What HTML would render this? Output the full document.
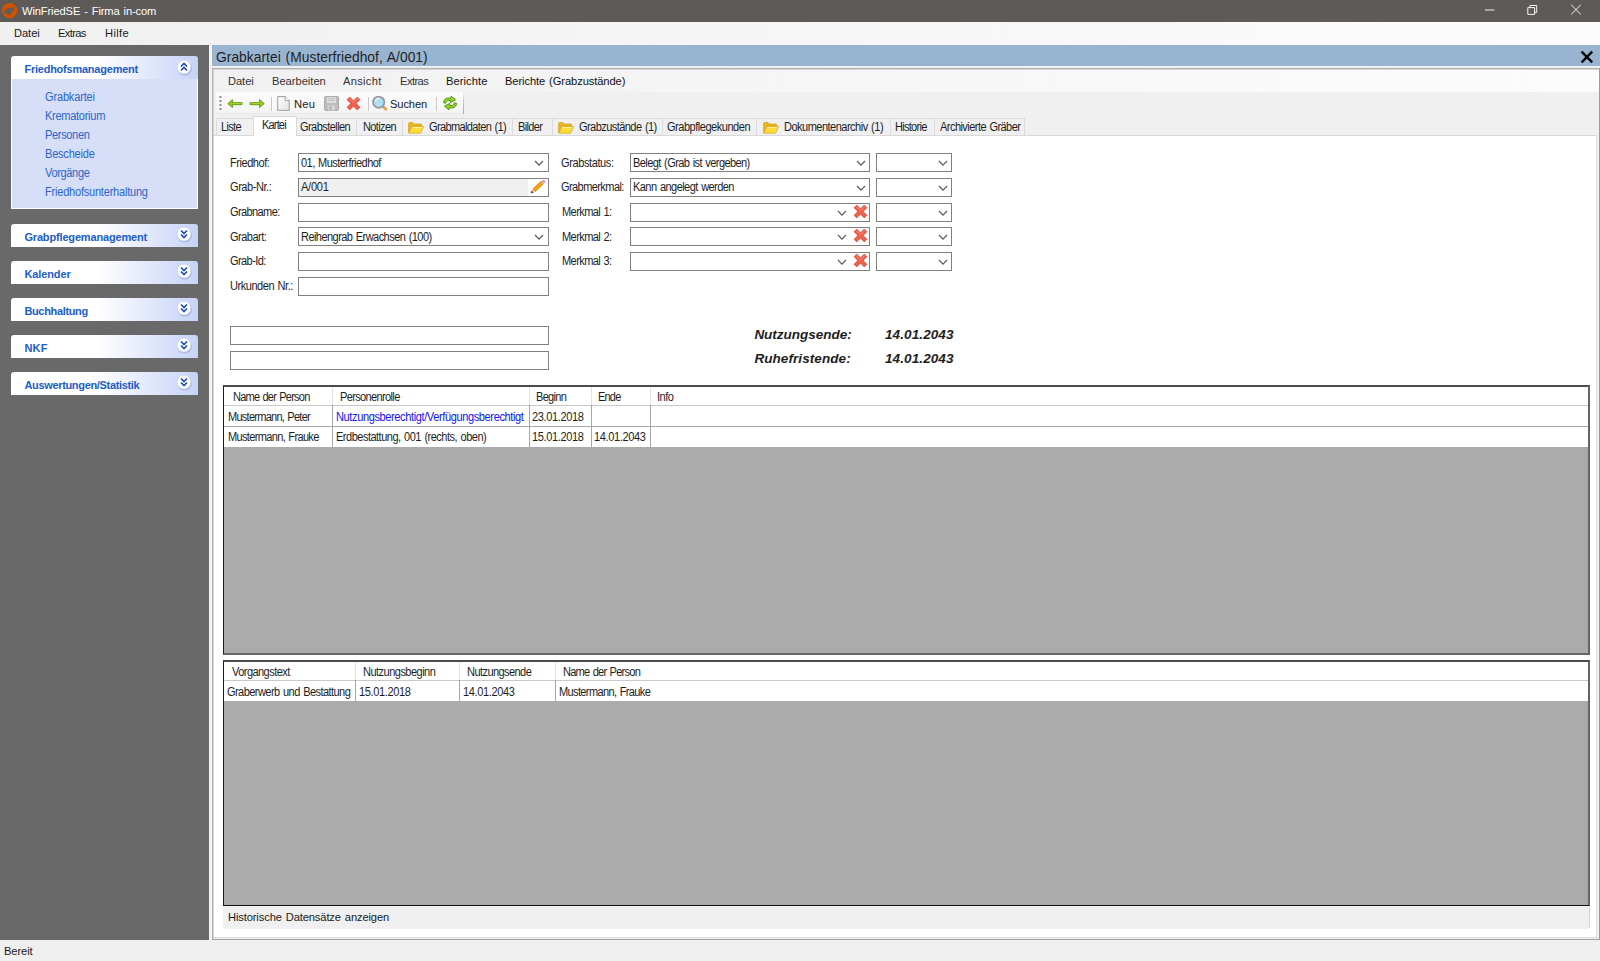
<!DOCTYPE html>
<html lang="de"><head><meta charset="utf-8"><title>WinFriedSE - Firma in-com</title>
<style>
html,body{margin:0;padding:0;background:#f0f0f0;}
#app{position:relative;width:1600px;height:961px;overflow:hidden;background:#f0f0f0;font-family:"Liberation Sans",sans-serif;}
.t{position:absolute;transform-origin:0 0;white-space:pre;word-spacing:1px;line-height:1;font-family:"Liberation Sans",sans-serif;}
svg{position:absolute;overflow:visible;}

</style></head>
<body>
<div id="app">
<div style="position:absolute;left:0px;top:0px;width:1600px;height:22px;background:#5d5a58"></div>
<svg style="left:2px;top:3px" width="16" height="16" viewBox="0 0 16 16"><circle cx="7.6" cy="7.6" r="7.6" fill="#cf5300"/><path d="M2.4 10.4 L2.4 7.2 L3.6 6 L4.3 6.9 L5.6 4.5 L6.8 5.5 L8.2 4.6 L9 5.3 L12.4 3.8 L11.6 7.2 L9.4 9.6 L8.4 11.4 L5.2 11.6 L4.4 10.8 Z" fill="#5f5c5a"/></svg>
<svg style="left:1480px;top:0" width="120" height="22" viewBox="0 0 120 22" fill="none" stroke="#f4f4f4" stroke-width="1">
<path d="M5 10 H14.4"/>
<path d="M47.8 7.6 H54.6 V14.4 H47.8 Z M49.9 7.6 V5.5 H56.7 V12.3 H54.6"/>
<path d="M91.2 4.8 L100.8 14.4 M100.8 4.8 L91.2 14.4"/></svg>
<div style="position:absolute;left:0px;top:22px;width:1600px;height:23px;background:linear-gradient(90deg,#f0f0f0 0,#fcfcfc 100%)"></div>
<div style="position:absolute;left:0px;top:45px;width:209px;height:895px;background:#696969"></div>
<div style="position:absolute;left:209px;top:45px;width:3px;height:895px;background:#f4f4f4"></div>
<div style="position:absolute;left:11px;top:56px;width:187px;height:23px;background:linear-gradient(90deg,#ffffff 0,#ffffff 46%,#c7d3f7 100%);border-radius:3px 3px 0 0;"></div>
<div style="position:absolute;left:11px;top:79px;width:187px;height:130px;background:#d6dff7;border:1px solid #fff;border-top:none;box-sizing:border-box"></div>
<svg style="left:174px;top:56.5px" width="20" height="20" viewBox="-10 -10 20 20"><circle cx="0.6" cy="1.2" r="7.4" fill="#6374b5" opacity="0.30"/><circle cx="0" cy="0" r="6.9" fill="#fff" stroke="#c9d2ee" stroke-width="0.8"/><path d="M-3 0.5 L0 -2.5 L3 0.5 M-3 4.5 L0 1.5 L3 4.5" transform="translate(0,-1)" fill="none" stroke="#1f4fb5" stroke-width="1.7"/></svg>
<div style="position:absolute;left:11px;top:224px;width:187px;height:23px;background:linear-gradient(90deg,#ffffff 0,#ffffff 46%,#c7d3f7 100%);border-radius:3px 3px 0 0;"></div>
<svg style="left:174px;top:224px" width="20" height="20" viewBox="-10 -10 20 20"><circle cx="0.6" cy="1.2" r="7.4" fill="#6374b5" opacity="0.30"/><circle cx="0" cy="0" r="6.9" fill="#fff" stroke="#c9d2ee" stroke-width="0.8"/><path d="M-3 -2.5 L0 0.5 L3 -2.5 M-3 1.5 L0 4.5 L3 1.5" transform="translate(0,-1)" fill="none" stroke="#1f4fb5" stroke-width="1.7"/></svg>
<div style="position:absolute;left:11px;top:261px;width:187px;height:23px;background:linear-gradient(90deg,#ffffff 0,#ffffff 46%,#c7d3f7 100%);border-radius:3px 3px 0 0;"></div>
<svg style="left:174px;top:261px" width="20" height="20" viewBox="-10 -10 20 20"><circle cx="0.6" cy="1.2" r="7.4" fill="#6374b5" opacity="0.30"/><circle cx="0" cy="0" r="6.9" fill="#fff" stroke="#c9d2ee" stroke-width="0.8"/><path d="M-3 -2.5 L0 0.5 L3 -2.5 M-3 1.5 L0 4.5 L3 1.5" transform="translate(0,-1)" fill="none" stroke="#1f4fb5" stroke-width="1.7"/></svg>
<div style="position:absolute;left:11px;top:298px;width:187px;height:23px;background:linear-gradient(90deg,#ffffff 0,#ffffff 46%,#c7d3f7 100%);border-radius:3px 3px 0 0;"></div>
<svg style="left:174px;top:298px" width="20" height="20" viewBox="-10 -10 20 20"><circle cx="0.6" cy="1.2" r="7.4" fill="#6374b5" opacity="0.30"/><circle cx="0" cy="0" r="6.9" fill="#fff" stroke="#c9d2ee" stroke-width="0.8"/><path d="M-3 -2.5 L0 0.5 L3 -2.5 M-3 1.5 L0 4.5 L3 1.5" transform="translate(0,-1)" fill="none" stroke="#1f4fb5" stroke-width="1.7"/></svg>
<div style="position:absolute;left:11px;top:335px;width:187px;height:23px;background:linear-gradient(90deg,#ffffff 0,#ffffff 46%,#c7d3f7 100%);border-radius:3px 3px 0 0;"></div>
<svg style="left:174px;top:335px" width="20" height="20" viewBox="-10 -10 20 20"><circle cx="0.6" cy="1.2" r="7.4" fill="#6374b5" opacity="0.30"/><circle cx="0" cy="0" r="6.9" fill="#fff" stroke="#c9d2ee" stroke-width="0.8"/><path d="M-3 -2.5 L0 0.5 L3 -2.5 M-3 1.5 L0 4.5 L3 1.5" transform="translate(0,-1)" fill="none" stroke="#1f4fb5" stroke-width="1.7"/></svg>
<div style="position:absolute;left:11px;top:372px;width:187px;height:23px;background:linear-gradient(90deg,#ffffff 0,#ffffff 46%,#c7d3f7 100%);border-radius:3px 3px 0 0;"></div>
<svg style="left:174px;top:372px" width="20" height="20" viewBox="-10 -10 20 20"><circle cx="0.6" cy="1.2" r="7.4" fill="#6374b5" opacity="0.30"/><circle cx="0" cy="0" r="6.9" fill="#fff" stroke="#c9d2ee" stroke-width="0.8"/><path d="M-3 -2.5 L0 0.5 L3 -2.5 M-3 1.5 L0 4.5 L3 1.5" transform="translate(0,-1)" fill="none" stroke="#1f4fb5" stroke-width="1.7"/></svg>
<div style="position:absolute;left:212px;top:45px;width:1388px;height:21px;background:#99b4d1"></div>
<svg style="left:1580px;top:50px" width="14" height="14" viewBox="0 0 14 14"><path d="M1.6 1.6 L12.2 12.4 M12.2 1.6 L1.6 12.4" stroke="#000" stroke-width="2.3" fill="none"/></svg>
<div style="position:absolute;left:212px;top:68px;width:1388px;height:872px;background:#f0f0f0;border:1px solid #b0b0b0;border-right-color:#9a9a9a;border-bottom-color:#a0a0a0;box-sizing:border-box"></div>
<div style="position:absolute;left:213px;top:69px;width:1386px;height:870px;border-top:1px solid #d6d6d6;border-left:1px solid #d6d6d6;box-sizing:border-box"></div>
<div style="position:absolute;left:214px;top:70px;width:1385px;height:22px;background:linear-gradient(90deg,#f1f1f1 0,#fcfcfc 100%)"></div>
<div style="position:absolute;left:214px;top:92px;width:1385px;height:44px;background:#f0f0f0"></div>
<div style="position:absolute;left:216px;top:92px;width:247px;height:22px;background:linear-gradient(180deg,#fcfcfc 0,#f4f4f4 100%);border-radius:3px 3px 2px 3px;border-bottom:1px solid #e8e8e8;box-sizing:border-box"></div>
<div style="position:absolute;left:463px;top:94px;width:1px;height:20px;background:linear-gradient(180deg,#f0f0f0 0,#c9c9c9 35%,#a9a9a9 100%)"></div>
<svg style="left:219px;top:95px" width="4" height="16" viewBox="0 0 4 16"><g fill="#8c8c8c"><rect x="0.5" y="1" width="2" height="2"/><rect x="0.5" y="5" width="2" height="2"/><rect x="0.5" y="9" width="2" height="2"/><rect x="0.5" y="13" width="2" height="2"/></g></svg>
<svg style="left:227px;top:98px" width="16" height="11" viewBox="0 0 16 11"><path d="M0.8 5.6 L5.4 1.7 L5.4 4.5 L15 4.5 L15 6.7 L5.4 6.7 L5.4 9.5 Z" fill="#96c81e" stroke="#6c9e12" stroke-width="1" stroke-linejoin="round"/><path d="M5.6 5.1 H14.4" stroke="#b6dc52" stroke-width="0.7"/></svg>
<svg style="left:249px;top:98px" width="16" height="11" viewBox="0 0 16 11"><path d="M15.2 5.6 L10.6 1.7 L10.6 4.5 L1 4.5 L1 6.7 L10.6 6.7 L10.6 9.5 Z" fill="#96c81e" stroke="#6c9e12" stroke-width="1" stroke-linejoin="round"/><path d="M1.6 5.1 H10.4" stroke="#b6dc52" stroke-width="0.7"/></svg>
<div style="position:absolute;left:271px;top:97px;width:1px;height:14px;background:#c6c6c6"></div>
<div style="position:absolute;left:272px;top:97px;width:1px;height:14px;background:#fff"></div>
<div style="position:absolute;left:368px;top:97px;width:1px;height:14px;background:#c6c6c6"></div>
<div style="position:absolute;left:369px;top:97px;width:1px;height:14px;background:#fff"></div>
<div style="position:absolute;left:436px;top:97px;width:1px;height:14px;background:#c6c6c6"></div>
<div style="position:absolute;left:437px;top:97px;width:1px;height:14px;background:#fff"></div>
<svg style="left:277px;top:96px" width="13" height="15" viewBox="0 0 13 15"><defs><linearGradient id="pg" x1="0" y1="0" x2="1" y2="1"><stop offset="0" stop-color="#fff"/><stop offset="1" stop-color="#e2e2e2"/></linearGradient></defs><path d="M0.7 0.6 H8.2 L12.3 4.6 V14.3 H0.7 Z" fill="url(#pg)" stroke="#9c9c9c" stroke-width="1"/><path d="M8.2 0.6 V4.6 H12.3" fill="#fff" stroke="#9c9c9c" stroke-width="0.9"/></svg>
<svg style="left:324px;top:96px" width="15" height="15" viewBox="0 0 15 15"><rect x="0.6" y="0.6" width="13.8" height="13.8" rx="1" fill="#bdbdbd" stroke="#a6a6a6"/><rect x="3" y="1" width="9" height="6" fill="#dcdcdc"/><path d="M4 2.6 H11 M4 4.4 H11" stroke="#bcbcbc" stroke-width="0.8"/><rect x="4" y="9.4" width="7" height="5" fill="#d6d6d6"/><rect x="5.4" y="10.4" width="2" height="3.2" fill="#aaa"/></svg>
<svg style="left:346px;top:96px" width="15" height="15" viewBox="0 0 15 15"><g fill="none" stroke-linecap="square"><path d="M3.8 3.8 L11.2 11.2 M11.2 3.8 L3.8 11.2" stroke="#dc4a38" stroke-width="4.4"/><path d="M3.8 3.8 L11.2 11.2 M11.2 3.8 L3.8 11.2" stroke="#f0604f" stroke-width="3.4"/><path d="M3.2 2.6 L7.5 6.6 L11.8 2.6" stroke="#f58b7d" stroke-width="1"/></g></svg>
<svg style="left:371px;top:94px" width="18" height="18" viewBox="0 0 18 18"><path d="M11.6 12 L14.4 14.8" stroke="#a8a8a8" stroke-width="2.6" stroke-linecap="round"/><path d="M13.8 14.2 L14.8 15.2" stroke="#e9a646" stroke-width="2.8" stroke-linecap="round"/><circle cx="7.7" cy="8.2" r="5.6" fill="#aee1f9" stroke="#9b9b9b" stroke-width="1.9"/><path d="M4.4 7.2 A3.6 3.6 0 0 1 8.4 4.4" stroke="#e9f8ff" stroke-width="1.4" fill="none"/></svg>
<svg style="left:442px;top:95px" width="16" height="16" viewBox="0 0 16 16"><g fill="#9ad023" stroke="#4b9a0e" stroke-width="1" stroke-linejoin="round"><path d="M1.4 7.6 C1.6 4 5 2.2 8.6 3.4 L9 1.2 L13.6 4.8 L8.2 7.6 L8.5 5.6 C6.2 5 4 5.6 3.6 8.2 Z"/><path d="M14.6 8.4 C14.4 12 11 13.8 7.4 12.6 L7 14.8 L2.4 11.2 L7.8 8.4 L7.5 10.4 C9.8 11 12 10.4 12.4 7.8 Z"/></g></svg>
<div style="position:absolute;left:214px;top:135px;width:1383px;height:1px;background:#d9d9d9"></div>
<div style="position:absolute;left:214px;top:136px;width:1383px;height:802px;background:#fff;border-right:1px solid #dcdcdc;border-bottom:1px solid #dcdcdc;box-sizing:border-box"></div>
<div style="position:absolute;left:216px;top:118px;width:39px;height:17px;background:#f0f0f0;border:1px solid #dcdcdc;border-bottom:none;box-sizing:border-box;"></div>
<div style="position:absolute;left:296px;top:118px;width:61px;height:17px;background:#f0f0f0;border:1px solid #dcdcdc;border-bottom:none;box-sizing:border-box;"></div>
<div style="position:absolute;left:356px;top:118px;width:47px;height:17px;background:#f0f0f0;border:1px solid #dcdcdc;border-bottom:none;box-sizing:border-box;"></div>
<div style="position:absolute;left:402px;top:118px;width:111px;height:17px;background:#f0f0f0;border:1px solid #dcdcdc;border-bottom:none;box-sizing:border-box;"></div>
<svg style="left:408.2px;top:121.6px" width="17" height="12" viewBox="0 0 17 12"><path d="M0.6 1.4 Q0.6 0.6 1.4 0.6 H5 L6.4 2 H13 Q13.6 2 13.6 2.8 V4.2 H3.6 L0.6 10.6 Z" fill="#e9b824" stroke="#d19f12" stroke-width="0.7"/><path d="M3.8 4.4 H15.6 L12.6 11.2 H0.8 Z" fill="#fbdc3c" stroke="#d9a714" stroke-width="0.7" stroke-linejoin="round"/><path d="M4.6 5.6 H13.6" stroke="#fff4a6" stroke-width="1"/></svg>
<div style="position:absolute;left:512px;top:118px;width:41px;height:17px;background:#f0f0f0;border:1px solid #dcdcdc;border-bottom:none;box-sizing:border-box;"></div>
<div style="position:absolute;left:552px;top:118px;width:111px;height:17px;background:#f0f0f0;border:1px solid #dcdcdc;border-bottom:none;box-sizing:border-box;"></div>
<svg style="left:557.8px;top:121.6px" width="17" height="12" viewBox="0 0 17 12"><path d="M0.6 1.4 Q0.6 0.6 1.4 0.6 H5 L6.4 2 H13 Q13.6 2 13.6 2.8 V4.2 H3.6 L0.6 10.6 Z" fill="#e9b824" stroke="#d19f12" stroke-width="0.7"/><path d="M3.8 4.4 H15.6 L12.6 11.2 H0.8 Z" fill="#fbdc3c" stroke="#d9a714" stroke-width="0.7" stroke-linejoin="round"/><path d="M4.6 5.6 H13.6" stroke="#fff4a6" stroke-width="1"/></svg>
<div style="position:absolute;left:662px;top:118px;width:95px;height:17px;background:#f0f0f0;border:1px solid #dcdcdc;border-bottom:none;box-sizing:border-box;"></div>
<div style="position:absolute;left:756px;top:118px;width:135px;height:17px;background:#f0f0f0;border:1px solid #dcdcdc;border-bottom:none;box-sizing:border-box;"></div>
<svg style="left:763px;top:121.6px" width="17" height="12" viewBox="0 0 17 12"><path d="M0.6 1.4 Q0.6 0.6 1.4 0.6 H5 L6.4 2 H13 Q13.6 2 13.6 2.8 V4.2 H3.6 L0.6 10.6 Z" fill="#e9b824" stroke="#d19f12" stroke-width="0.7"/><path d="M3.8 4.4 H15.6 L12.6 11.2 H0.8 Z" fill="#fbdc3c" stroke="#d9a714" stroke-width="0.7" stroke-linejoin="round"/><path d="M4.6 5.6 H13.6" stroke="#fff4a6" stroke-width="1"/></svg>
<div style="position:absolute;left:890px;top:118px;width:45px;height:17px;background:#f0f0f0;border:1px solid #dcdcdc;border-bottom:none;box-sizing:border-box;"></div>
<div style="position:absolute;left:934px;top:118px;width:91px;height:17px;background:#f0f0f0;border:1px solid #dcdcdc;border-bottom:none;box-sizing:border-box;"></div>
<div style="position:absolute;left:253px;top:116px;width:44px;height:20px;background:#fff;border:1px solid #d9d9d9;border-bottom:none;box-sizing:border-box"></div>
<div style="position:absolute;left:298px;top:153px;width:251px;height:19px;background:#fff;border:1px solid #808080;box-sizing:border-box;"></div>
<div style="position:absolute;left:298px;top:178px;width:251px;height:19px;background:#f0f0f0;border:1px solid #808080;box-sizing:border-box;"></div>
<div style="position:absolute;left:298px;top:203px;width:251px;height:19px;background:#fff;border:1px solid #808080;box-sizing:border-box;"></div>
<div style="position:absolute;left:298px;top:227px;width:251px;height:19px;background:#fff;border:1px solid #808080;box-sizing:border-box;"></div>
<div style="position:absolute;left:298px;top:252px;width:251px;height:19px;background:#fff;border:1px solid #808080;box-sizing:border-box;"></div>
<div style="position:absolute;left:298px;top:277px;width:251px;height:19px;background:#fff;border:1px solid #808080;box-sizing:border-box;"></div>
<div style="position:absolute;left:528px;top:179px;width:20px;height:17px;background:#fff"></div>
<svg style="left:529px;top:179px" width="18" height="16" viewBox="0 0 18 16"><path d="M1.6 14.6 L2.6 11.2 L5 13.6 Z" fill="#5a4a32"/><path d="M2.6 11.2 L3.8 10 L6.2 12.4 L5 13.6 Z" fill="#f3d9a4"/><path d="M3.8 10 L11.8 2.6 L14.2 5 L6.2 12.4 Z" fill="#f6a21e" stroke="#e2900f" stroke-width="1"/><path d="M11.8 2.6 L12.8 1.7 L15.2 4.1 L14.2 5 Z" fill="#b8b8b8"/><path d="M12.8 1.7 Q14.6 0.2 15.9 1.5 Q17 2.8 15.2 4.1 Z" fill="#e27fd2"/></svg>
<svg style="left:534px;top:160px" width="10" height="7" viewBox="0 0 10 7"><path d="M1 1 L5 5.2 L9 1" fill="none" stroke="#5a5a5a" stroke-width="1.2"/></svg>
<svg style="left:534px;top:234px" width="10" height="7" viewBox="0 0 10 7"><path d="M1 1 L5 5.2 L9 1" fill="none" stroke="#5a5a5a" stroke-width="1.2"/></svg>
<div style="position:absolute;left:630px;top:153px;width:240px;height:19px;background:#fff;border:1px solid #808080;box-sizing:border-box;"></div>
<div style="position:absolute;left:876px;top:153px;width:76px;height:19px;background:#fff;border:1px solid #808080;box-sizing:border-box;"></div>
<svg style="left:938px;top:160px" width="10" height="7" viewBox="0 0 10 7"><path d="M1 1 L5 5.2 L9 1" fill="none" stroke="#5a5a5a" stroke-width="1.2"/></svg>
<svg style="left:856px;top:160px" width="10" height="7" viewBox="0 0 10 7"><path d="M1 1 L5 5.2 L9 1" fill="none" stroke="#5a5a5a" stroke-width="1.2"/></svg>
<div style="position:absolute;left:630px;top:178px;width:240px;height:19px;background:#fff;border:1px solid #808080;box-sizing:border-box;"></div>
<div style="position:absolute;left:876px;top:178px;width:76px;height:19px;background:#fff;border:1px solid #808080;box-sizing:border-box;"></div>
<svg style="left:938px;top:185px" width="10" height="7" viewBox="0 0 10 7"><path d="M1 1 L5 5.2 L9 1" fill="none" stroke="#5a5a5a" stroke-width="1.2"/></svg>
<svg style="left:856px;top:185px" width="10" height="7" viewBox="0 0 10 7"><path d="M1 1 L5 5.2 L9 1" fill="none" stroke="#5a5a5a" stroke-width="1.2"/></svg>
<div style="position:absolute;left:630px;top:203px;width:240px;height:19px;background:#fff;border:1px solid #808080;box-sizing:border-box;"></div>
<div style="position:absolute;left:876px;top:203px;width:76px;height:19px;background:#fff;border:1px solid #808080;box-sizing:border-box;"></div>
<svg style="left:938px;top:210px" width="10" height="7" viewBox="0 0 10 7"><path d="M1 1 L5 5.2 L9 1" fill="none" stroke="#5a5a5a" stroke-width="1.2"/></svg>
<svg style="left:837px;top:210px" width="10" height="7" viewBox="0 0 10 7"><path d="M1 1 L5 5.2 L9 1" fill="none" stroke="#5a5a5a" stroke-width="1.2"/></svg>
<svg style="left:852.5px;top:204px" width="15" height="15" viewBox="0 0 15 15"><g fill="none" stroke-linecap="square"><path d="M3.8 3.8 L11.2 11.2 M11.2 3.8 L3.8 11.2" stroke="#dc4a38" stroke-width="4.4"/><path d="M3.8 3.8 L11.2 11.2 M11.2 3.8 L3.8 11.2" stroke="#f0604f" stroke-width="3.4"/><path d="M3.2 2.6 L7.5 6.6 L11.8 2.6" stroke="#f58b7d" stroke-width="1"/></g></svg>
<div style="position:absolute;left:630px;top:227px;width:240px;height:19px;background:#fff;border:1px solid #808080;box-sizing:border-box;"></div>
<div style="position:absolute;left:876px;top:227px;width:76px;height:19px;background:#fff;border:1px solid #808080;box-sizing:border-box;"></div>
<svg style="left:938px;top:234px" width="10" height="7" viewBox="0 0 10 7"><path d="M1 1 L5 5.2 L9 1" fill="none" stroke="#5a5a5a" stroke-width="1.2"/></svg>
<svg style="left:837px;top:234px" width="10" height="7" viewBox="0 0 10 7"><path d="M1 1 L5 5.2 L9 1" fill="none" stroke="#5a5a5a" stroke-width="1.2"/></svg>
<svg style="left:852.5px;top:228px" width="15" height="15" viewBox="0 0 15 15"><g fill="none" stroke-linecap="square"><path d="M3.8 3.8 L11.2 11.2 M11.2 3.8 L3.8 11.2" stroke="#dc4a38" stroke-width="4.4"/><path d="M3.8 3.8 L11.2 11.2 M11.2 3.8 L3.8 11.2" stroke="#f0604f" stroke-width="3.4"/><path d="M3.2 2.6 L7.5 6.6 L11.8 2.6" stroke="#f58b7d" stroke-width="1"/></g></svg>
<div style="position:absolute;left:630px;top:252px;width:240px;height:19px;background:#fff;border:1px solid #808080;box-sizing:border-box;"></div>
<div style="position:absolute;left:876px;top:252px;width:76px;height:19px;background:#fff;border:1px solid #808080;box-sizing:border-box;"></div>
<svg style="left:938px;top:259px" width="10" height="7" viewBox="0 0 10 7"><path d="M1 1 L5 5.2 L9 1" fill="none" stroke="#5a5a5a" stroke-width="1.2"/></svg>
<svg style="left:837px;top:259px" width="10" height="7" viewBox="0 0 10 7"><path d="M1 1 L5 5.2 L9 1" fill="none" stroke="#5a5a5a" stroke-width="1.2"/></svg>
<svg style="left:852.5px;top:253px" width="15" height="15" viewBox="0 0 15 15"><g fill="none" stroke-linecap="square"><path d="M3.8 3.8 L11.2 11.2 M11.2 3.8 L3.8 11.2" stroke="#dc4a38" stroke-width="4.4"/><path d="M3.8 3.8 L11.2 11.2 M11.2 3.8 L3.8 11.2" stroke="#f0604f" stroke-width="3.4"/><path d="M3.2 2.6 L7.5 6.6 L11.8 2.6" stroke="#f58b7d" stroke-width="1"/></g></svg>
<div style="position:absolute;left:230px;top:326px;width:319px;height:19px;background:#fff;border:1px solid #808080;box-sizing:border-box;"></div>
<div style="position:absolute;left:230px;top:351px;width:319px;height:19px;background:#fff;border:1px solid #808080;box-sizing:border-box;"></div>
<div style="position:absolute;left:223px;top:385px;width:1367px;height:270px;background:#ababab;border-top:2px solid #4c4c4c;border-left:1px solid #1c1c1c;border-right:2px solid #646464;border-bottom:2px solid #686868;box-sizing:border-box"></div>
<div style="position:absolute;left:224px;top:387px;width:1364px;height:60px;background:#fff"></div>
<div style="position:absolute;left:224px;top:405px;width:1364px;height:1px;background:#c9c9c9"></div>
<div style="position:absolute;left:224px;top:426px;width:1364px;height:1px;background:#a6a6a6"></div>
<div style="position:absolute;left:332px;top:387px;width:1px;height:18px;background:#e2e2e2"></div>
<div style="position:absolute;left:332px;top:405px;width:1px;height:42px;background:#a6a6a6"></div>
<div style="position:absolute;left:529px;top:387px;width:1px;height:18px;background:#e2e2e2"></div>
<div style="position:absolute;left:529px;top:405px;width:1px;height:42px;background:#a6a6a6"></div>
<div style="position:absolute;left:591px;top:387px;width:1px;height:18px;background:#e2e2e2"></div>
<div style="position:absolute;left:591px;top:405px;width:1px;height:42px;background:#a6a6a6"></div>
<div style="position:absolute;left:650px;top:387px;width:1px;height:18px;background:#e2e2e2"></div>
<div style="position:absolute;left:650px;top:405px;width:1px;height:42px;background:#a6a6a6"></div>
<div style="position:absolute;left:223px;top:660px;width:1367px;height:246px;background:#ababab;border-top:2px solid #4c4c4c;border-left:1px solid #1c1c1c;border-right:2px solid #646464;border-bottom:1px solid #111;box-sizing:border-box"></div>
<div style="position:absolute;left:224px;top:662px;width:1364px;height:39px;background:#fff"></div>
<div style="position:absolute;left:224px;top:680px;width:1364px;height:1px;background:#c9c9c9"></div>
<div style="position:absolute;left:355px;top:662px;width:1px;height:18px;background:#e2e2e2"></div>
<div style="position:absolute;left:355px;top:680px;width:1px;height:21px;background:#a6a6a6"></div>
<div style="position:absolute;left:459px;top:662px;width:1px;height:18px;background:#e2e2e2"></div>
<div style="position:absolute;left:459px;top:680px;width:1px;height:21px;background:#a6a6a6"></div>
<div style="position:absolute;left:555px;top:662px;width:1px;height:18px;background:#e2e2e2"></div>
<div style="position:absolute;left:555px;top:680px;width:1px;height:21px;background:#a6a6a6"></div>
<div style="position:absolute;left:223px;top:906px;width:1367px;height:23px;background:#f0f0f0;border-radius:0 0 4px 4px;border-right:1px solid #d4d4d4;box-sizing:border-box"></div>
<div style="position:absolute;left:0px;top:940px;width:1600px;height:21px;background:#f0f0f0"></div>
<span class="t" style="left:22.3px;top:6px;font-size:11.5px;color:#fff;letter-spacing:-0.13px;transform:scaleX(0.97);">WinFriedSE - Firma in-com</span>
<span class="t" style="left:14.3px;top:28px;font-size:11.5px;color:#1a1a1a;letter-spacing:-0.07px;transform:scaleX(0.97);">Datei</span>
<span class="t" style="left:58.3px;top:28px;font-size:11.5px;color:#1a1a1a;letter-spacing:-0.68px;transform:scaleX(0.97);">Extras</span>
<span class="t" style="left:104.8px;top:28px;font-size:11.5px;color:#1a1a1a;letter-spacing:0.38px;transform:scaleX(0.97);">Hilfe</span>
<span class="t" style="left:24.4px;top:64px;font-size:11px;color:#215dc6;font-weight:bold;letter-spacing:-0.23px;">Friedhofsmanagement</span>
<span class="t" style="left:45.0px;top:91px;font-size:12px;color:#2d66cb;letter-spacing:-0.19px;transform:scaleX(0.92);">Grabkartei</span>
<span class="t" style="left:45.0px;top:110px;font-size:12px;color:#2d66cb;letter-spacing:-0.31px;transform:scaleX(0.92);">Krematorium</span>
<span class="t" style="left:45.0px;top:129px;font-size:12px;color:#2d66cb;letter-spacing:-0.38px;transform:scaleX(0.92);">Personen</span>
<span class="t" style="left:45.0px;top:148px;font-size:12px;color:#2d66cb;letter-spacing:-0.24px;transform:scaleX(0.92);">Bescheide</span>
<span class="t" style="left:45.0px;top:167px;font-size:12px;color:#2d66cb;letter-spacing:-0.38px;transform:scaleX(0.92);">Vorgänge</span>
<span class="t" style="left:45.0px;top:186px;font-size:12px;color:#2d66cb;letter-spacing:-0.24px;transform:scaleX(0.92);">Friedhofsunterhaltung</span>
<span class="t" style="left:24.4px;top:232px;font-size:11px;color:#215dc6;font-weight:bold;letter-spacing:-0.16px;">Grabpflegemanagement</span>
<span class="t" style="left:24.4px;top:269px;font-size:11px;color:#215dc6;font-weight:bold;letter-spacing:-0.11px;">Kalender</span>
<span class="t" style="left:24.4px;top:306px;font-size:11px;color:#215dc6;font-weight:bold;letter-spacing:-0.34px;">Buchhaltung</span>
<span class="t" style="left:24.4px;top:343px;font-size:11px;color:#215dc6;font-weight:bold;letter-spacing:0.22px;">NKF</span>
<span class="t" style="left:24.4px;top:380px;font-size:11px;color:#215dc6;font-weight:bold;letter-spacing:-0.33px;">Auswertungen/Statistik</span>
<span class="t" style="left:216.3px;top:49px;font-size:15px;color:#1e1e1e;letter-spacing:0.04px;transform:scaleX(0.92);">Grabkartei (Musterfriedhof, A/001)</span>
<span class="t" style="left:227.8px;top:76px;font-size:11.5px;color:#333;letter-spacing:-0.07px;transform:scaleX(0.97);">Datei</span>
<span class="t" style="left:271.6px;top:76px;font-size:11.5px;color:#333;letter-spacing:-0.02px;transform:scaleX(0.97);">Bearbeiten</span>
<span class="t" style="left:343.2px;top:76px;font-size:11.5px;color:#333;letter-spacing:0.29px;transform:scaleX(0.97);">Ansicht</span>
<span class="t" style="left:399.6px;top:76px;font-size:11.5px;color:#333;letter-spacing:-0.58px;transform:scaleX(0.97);">Extras</span>
<span class="t" style="left:446.1px;top:76px;font-size:11.5px;color:#111;letter-spacing:0.06px;transform:scaleX(0.97);">Berichte</span>
<span class="t" style="left:505.1px;top:76px;font-size:11.5px;color:#111;letter-spacing:-0.10px;transform:scaleX(0.97);">Berichte (Grabzustände)</span>
<span class="t" style="left:294.3px;top:99px;font-size:11.5px;color:#1a1a1a;letter-spacing:0.27px;transform:scaleX(0.97);">Neu</span>
<span class="t" style="left:390.4px;top:99px;font-size:11.5px;color:#1a1a1a;letter-spacing:-0.13px;transform:scaleX(0.97);">Suchen</span>
<span class="t" style="left:220.9px;top:121px;font-size:12px;color:#1e1e1e;letter-spacing:-0.74px;transform:scaleX(0.92);">Liste</span>
<span class="t" style="left:300.3px;top:121px;font-size:12px;color:#1e1e1e;letter-spacing:-0.62px;transform:scaleX(0.92);">Grabstellen</span>
<span class="t" style="left:362.8px;top:121px;font-size:12px;color:#1e1e1e;letter-spacing:-0.69px;transform:scaleX(0.92);">Notizen</span>
<span class="t" style="left:429.0px;top:121px;font-size:12px;color:#1e1e1e;letter-spacing:-0.71px;transform:scaleX(0.92);">Grabmaldaten (1)</span>
<span class="t" style="left:518.2px;top:121px;font-size:12px;color:#1e1e1e;letter-spacing:-0.70px;transform:scaleX(0.92);">Bilder</span>
<span class="t" style="left:578.6px;top:121px;font-size:12px;color:#1e1e1e;letter-spacing:-0.62px;transform:scaleX(0.92);">Grabzustände (1)</span>
<span class="t" style="left:667.0px;top:121px;font-size:12px;color:#1e1e1e;letter-spacing:-0.53px;transform:scaleX(0.92);">Grabpflegekunden</span>
<span class="t" style="left:783.8px;top:121px;font-size:12px;color:#1e1e1e;letter-spacing:-0.57px;transform:scaleX(0.92);">Dokumentenarchiv (1)</span>
<span class="t" style="left:895.4px;top:121px;font-size:12px;color:#1e1e1e;letter-spacing:-0.80px;transform:scaleX(0.92);">Historie</span>
<span class="t" style="left:940.0px;top:121px;font-size:12px;color:#1e1e1e;letter-spacing:-0.61px;transform:scaleX(0.92);">Archivierte Gräber</span>
<span class="t" style="left:261.5px;top:119px;font-size:12px;color:#1e1e1e;letter-spacing:-0.92px;transform:scaleX(0.92);">Kartei</span>
<span class="t" style="left:230.3px;top:157px;font-size:12px;color:#1e1e1e;letter-spacing:-0.50px;transform:scaleX(0.92);">Friedhof:</span>
<span class="t" style="left:230.3px;top:181px;font-size:12px;color:#1e1e1e;letter-spacing:-0.49px;transform:scaleX(0.92);">Grab-Nr.:</span>
<span class="t" style="left:230.3px;top:206px;font-size:12px;color:#1e1e1e;letter-spacing:-0.67px;transform:scaleX(0.92);">Grabname:</span>
<span class="t" style="left:230.3px;top:231px;font-size:12px;color:#1e1e1e;letter-spacing:-0.57px;transform:scaleX(0.92);">Grabart:</span>
<span class="t" style="left:230.3px;top:255px;font-size:12px;color:#1e1e1e;letter-spacing:-0.65px;transform:scaleX(0.92);">Grab-Id:</span>
<span class="t" style="left:230.3px;top:280px;font-size:12px;color:#1e1e1e;letter-spacing:-0.52px;transform:scaleX(0.92);">Urkunden Nr.:</span>
<span class="t" style="left:301.0px;top:157px;font-size:12px;color:#1e1e1e;letter-spacing:-0.61px;transform:scaleX(0.92);">01, Musterfriedhof</span>
<span class="t" style="left:301.0px;top:181px;font-size:12px;color:#1e1e1e;letter-spacing:-0.29px;transform:scaleX(0.92);">A/001</span>
<span class="t" style="left:301.0px;top:231px;font-size:12px;color:#1e1e1e;letter-spacing:-0.62px;transform:scaleX(0.92);">Reihengrab Erwachsen (100)</span>
<span class="t" style="left:561.3px;top:157px;font-size:12px;color:#1e1e1e;letter-spacing:-0.44px;transform:scaleX(0.92);">Grabstatus:</span>
<span class="t" style="left:561.3px;top:181px;font-size:12px;color:#1e1e1e;letter-spacing:-0.65px;transform:scaleX(0.92);">Grabmerkmal:</span>
<span class="t" style="left:562.3px;top:206px;font-size:12px;color:#1e1e1e;letter-spacing:-0.65px;transform:scaleX(0.92);">Merkmal 1:</span>
<span class="t" style="left:562.3px;top:231px;font-size:12px;color:#1e1e1e;letter-spacing:-0.65px;transform:scaleX(0.92);">Merkmal 2:</span>
<span class="t" style="left:562.3px;top:255px;font-size:12px;color:#1e1e1e;letter-spacing:-0.65px;transform:scaleX(0.92);">Merkmal 3:</span>
<span class="t" style="left:633.4px;top:157px;font-size:12px;color:#1e1e1e;letter-spacing:-0.65px;transform:scaleX(0.92);">Belegt (Grab ist vergeben)</span>
<span class="t" style="left:633.4px;top:181px;font-size:12px;color:#1e1e1e;letter-spacing:-0.62px;transform:scaleX(0.92);">Kann angelegt werden</span>
<span class="t" style="left:754.4px;top:328px;font-size:13.5px;color:#1e1e1e;font-weight:bold;font-style:italic;letter-spacing:-0.02px;">Nutzungsende:</span>
<span class="t" style="left:885.0px;top:328px;font-size:13.5px;color:#1e1e1e;font-weight:bold;font-style:italic;letter-spacing:0.10px;">14.01.2043</span>
<span class="t" style="left:754.4px;top:352px;font-size:13.5px;color:#1e1e1e;font-weight:bold;font-style:italic;letter-spacing:0.08px;">Ruhefristende:</span>
<span class="t" style="left:885.0px;top:352px;font-size:13.5px;color:#1e1e1e;font-weight:bold;font-style:italic;letter-spacing:0.10px;">14.01.2043</span>
<span class="t" style="left:232.6px;top:391px;font-size:12px;color:#1e1e1e;letter-spacing:-0.86px;transform:scaleX(0.92);">Name der Person</span>
<span class="t" style="left:340.0px;top:391px;font-size:12px;color:#1e1e1e;letter-spacing:-0.71px;transform:scaleX(0.92);">Personenrolle</span>
<span class="t" style="left:536.3px;top:391px;font-size:12px;color:#1e1e1e;letter-spacing:-0.78px;transform:scaleX(0.92);">Beginn</span>
<span class="t" style="left:598.0px;top:391px;font-size:12px;color:#1e1e1e;letter-spacing:-0.90px;transform:scaleX(0.92);">Ende</span>
<span class="t" style="left:657.0px;top:391px;font-size:12px;color:#1e1e1e;letter-spacing:-0.58px;transform:scaleX(0.92);">Info</span>
<span class="t" style="left:227.8px;top:411px;font-size:12px;color:#1e1e1e;letter-spacing:-0.82px;transform:scaleX(0.92);">Mustermann, Peter</span>
<span class="t" style="left:336.3px;top:411px;font-size:12px;color:#1414f0;letter-spacing:-0.42px;transform:scaleX(0.92);">Nutzungsberechtigt/Verfügungsberechtigt</span>
<span class="t" style="left:532.3px;top:411px;font-size:12px;color:#1e1e1e;letter-spacing:-0.42px;transform:scaleX(0.92);">23.01.2018</span>
<span class="t" style="left:227.8px;top:431px;font-size:12px;color:#1e1e1e;letter-spacing:-0.73px;transform:scaleX(0.92);">Mustermann, Frauke</span>
<span class="t" style="left:336.3px;top:431px;font-size:12px;color:#1e1e1e;letter-spacing:-0.56px;transform:scaleX(0.92);">Erdbestattung, 001 (rechts, oben)</span>
<span class="t" style="left:532.3px;top:431px;font-size:12px;color:#1e1e1e;letter-spacing:-0.42px;transform:scaleX(0.92);">15.01.2018</span>
<span class="t" style="left:594.3px;top:431px;font-size:12px;color:#1e1e1e;letter-spacing:-0.42px;transform:scaleX(0.92);">14.01.2043</span>
<span class="t" style="left:232.3px;top:666px;font-size:12px;color:#1e1e1e;letter-spacing:-0.61px;transform:scaleX(0.92);">Vorgangstext</span>
<span class="t" style="left:362.8px;top:666px;font-size:12px;color:#1e1e1e;letter-spacing:-0.58px;transform:scaleX(0.92);">Nutzungsbeginn</span>
<span class="t" style="left:466.8px;top:666px;font-size:12px;color:#1e1e1e;letter-spacing:-0.63px;transform:scaleX(0.92);">Nutzungsende</span>
<span class="t" style="left:562.8px;top:666px;font-size:12px;color:#1e1e1e;letter-spacing:-0.82px;transform:scaleX(0.92);">Name der Person</span>
<span class="t" style="left:227.3px;top:686px;font-size:12px;color:#1e1e1e;letter-spacing:-0.62px;transform:scaleX(0.92);">Graberwerb und Bestattung</span>
<span class="t" style="left:359.3px;top:686px;font-size:12px;color:#1e1e1e;letter-spacing:-0.42px;transform:scaleX(0.92);">15.01.2018</span>
<span class="t" style="left:463.1px;top:686px;font-size:12px;color:#1e1e1e;letter-spacing:-0.42px;transform:scaleX(0.92);">14.01.2043</span>
<span class="t" style="left:559.0px;top:686px;font-size:12px;color:#1e1e1e;letter-spacing:-0.70px;transform:scaleX(0.92);">Mustermann, Frauke</span>
<span class="t" style="left:227.8px;top:912px;font-size:11.5px;color:#1a1a1a;letter-spacing:-0.13px;transform:scaleX(0.97);">Historische Datensätze anzeigen</span>
<span class="t" style="left:4.0px;top:946px;font-size:11.5px;color:#1a1a1a;letter-spacing:-0.09px;transform:scaleX(0.97);">Bereit</span>
</div>
</body></html>
